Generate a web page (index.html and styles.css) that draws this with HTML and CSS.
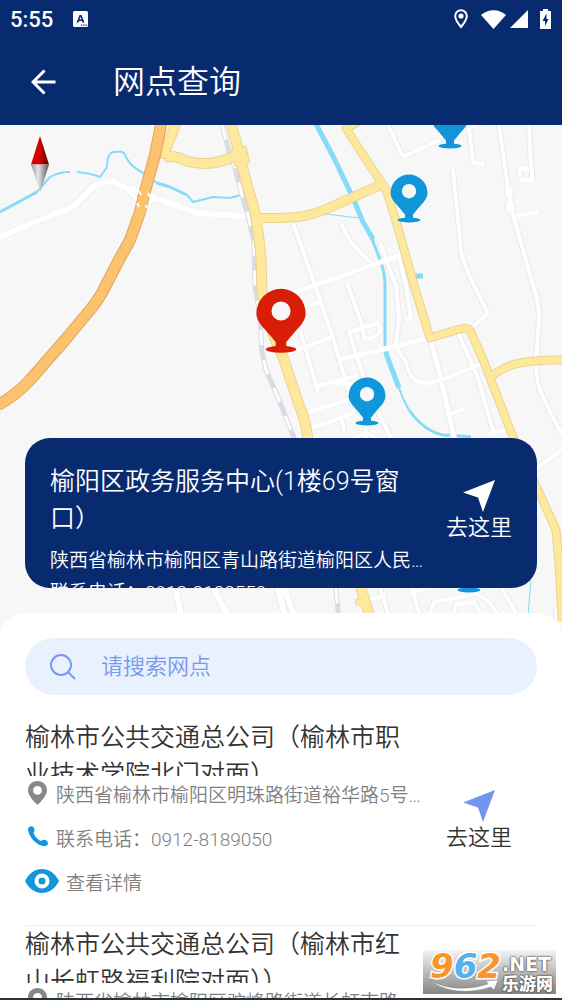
FILE: index.html
```html
<!DOCTYPE html>
<html lang="zh-CN">
<head>
  <meta charset="UTF-8">
  <meta name="viewport" content="width=device-width, initial-scale=1.0">
  <title>网点查询</title>
  <link rel="stylesheet" href="styles.css">
</head>
<body>
  <header class="header">
    <div class="status-bar">
      <span class="clock">5:55</span>
      <svg class="input-icon" width="15" height="16" viewBox="0 0 15 16">
        <rect width="15" height="16" rx="1.5" fill="#fff"/>
        <path d="M3.6 11.5 6.5 4h2l2.9 7.5H9.5L9 10H6l-.5 1.500zM6.500 8.500h2l-1-2.700z" fill="#082b6f"/>
        <path d="M8 13.500h1.300v1.300H8zm2.200 0h1.300v1.300h-1.300zm2.200 0h1.300v1.300h-1.300z" fill="#082b6f"/>
      </svg>
      <div class="status-icons">
        <svg width="14" height="20" viewBox="0 0 14 20">
          <path d="M7 1.200a5.800 5.800 0 0 0-5.800 5.900C1.200 11.300 7 18 7 18s5.800-6.700 5.800-10.900A5.800 5.800 0 0 0 7 1.200z" fill="none" stroke="#fff" stroke-width="2"/>
          <circle cx="7" cy="7" r="2.600" fill="#fff"/>
        </svg>
        <svg class="wifi" width="25" height="19" viewBox="0 0 25 19">
          <path d="M0 5C3.500 1.800 8 .2 12.500.2S21.500 1.800 25 5L12.500 19z" fill="#fff"/>
        </svg>
        <svg width="18" height="18" viewBox="0 0 18 18"><path d="M18 0v18H0z" fill="#fff"/></svg>
        <svg class="battery" width="11" height="20" viewBox="0 0 11 20">
          <path d="M3 0h5v2h3v18H0V2h3z" fill="#fff"/>
          <path d="M6.500 4.500 2.500 12h2.500v5l3.500-7H6.500z" fill="#082b6f"/>
        </svg>
      </div>
    </div>
    <div class="app-bar">
      <button class="back" type="button" aria-label="返回">
        <svg width="25" height="26" viewBox="0 0 25 26">
          <path d="M24.500 13H2.500M13.500 1.500 2 13l11.500 11.500" fill="none" stroke="#fff" stroke-width="3"/>
        </svg>
      </button>
      <h1>网点查询</h1>
    </div>
  </header>

  <main>
    <section class="map-area" aria-label="地图">
      <svg class="map" viewBox="0 125 562 515" preserveAspectRatio="xMidYMin slice">
        <defs>
          <linearGradient id="needle-red"><stop offset="0" stop-color="#e00000"/><stop offset=".45" stop-color="#d40000"/><stop offset="1" stop-color="#5c0000"/></linearGradient>
          <linearGradient id="needle-grey"><stop offset="0" stop-color="#999"/><stop offset=".4" stop-color="#e6e6e6"/><stop offset="1" stop-color="#555"/></linearGradient>
          <g id="pin">
            <path fill-rule="evenodd" d="M0 2C-2-3-7-8-12-14-16-18-18.500-22-18.500-26a18.500 18.500 0 0 1 37 0C18.500-22 16-18 12-14 7-8 2-3 0 2zM0-35a7.200 7.200 0 1 0 0 14.400A7.200 7.200 0 0 0 0-35z"/>
            <path d="M-4-4h8v4h-8z"/>
            <ellipse cy="1" rx="11.500" ry="2.600"/>
          </g>
          <g id="white-roads">
            <path d="M0 237 30 224 70 208Q78 203 85 195T97 185Q104 181 113 182L125 187 143 193 163 201 197 213 227 215 252 217" stroke-width="6"/>
            <path d="M126 188 138 201M149 203 156 196M165 204h12"/>
            <path d="M388 125 403 157 439 140M478 125 469 128 473 163 483 164"/>
            <path d="M453 171 458 218 461 252Q464 265 474 285L488 313 473 327"/>
            <path d="M499 125 509 195 514 218 533 285Q539 302 539 318L536 362Q536 378 540 390L548 408 562 435"/>
            <path d="M509 190v4M510 205v4" stroke-width="8"/>
            <path d="M529 125 531 168M519 169h13v11h-11zM516 216 538 212"/>
            <path d="M293 223 314 282 333 338 346 382 352 404"/>
            <path d="M288 294 330 280 401 255" stroke-width="5"/>
            <path d="M342 225Q348 240 356 248L371 263"/>
            <path d="M381 245 389 268 396 285 399 318 396 345Q399 353 406 362 408 374 415 380T441 380L479 365"/>
            <path d="M399 258 406 285 411 319 407 320"/>
            <path d="M348 285 361 322 364 338Q371 340 377 335T378 323L349 332 359 363 368 390 381 418 391 438"/>
            <path d="M342 359 430 338" stroke-width="5"/>
            <path d="M288 353 333 337M301 333 318 392M318 386 356 376M294 310 318 303M336 384h16"/>
            <path d="M308 412 348 400M311 428 354 413M341 418 344 430"/>
            <path d="M431 340 444 392 454 438" stroke-width="5"/>
            <path d="M459 335 478 378 494 434M453 413 463 409M490 433 506 430"/>
            <path d="M344 442 366 433 385 442M366 430v12M538 467 562 450"/>
            <path d="M174 580 182 620M209 580 230 620M276 580 286 620M284 588 296 620" stroke-width="6"/>
            <path d="M362 602 384 595M379 584 390 620M410 580 421 620M412 592 445 584M428 620 434 602 476 594Q492 600 500 620M499 584 520 620M452 618 456 605 474 602 483 618"/>
            <path d="M557 608v10" stroke-width="5"/>
          </g>
          <g id="yellow-roads">
            <path d="M177 120Q172 135 168 143 165 150 165 158M165 157Q175 155 186 161 207 167 228 159L242 152"/>
            <path d="M230 120 237 145 241 162 248 188 255 212Q259 235 261 258L262 290Q265 320 283 357L299 405Q306 420 308 440L361 588 371 620" stroke-width="9"/>
            <path d="M238 148 242 164" stroke-width="15"/>
            <path d="M257 218H281Q305 218 324 210L358 195 383 184" stroke-width="8"/>
            <path d="M358 122 346 128 361 152 381 182Q386 188 388 195L398 228 414 285 430 338 456 330Q466 327 470 330L484 362 511 432 538 490 556 530 559 563 562 620" stroke-width="7"/>
            <path d="M491 377Q500 369 515 364 530 360 562 360" stroke-width="7"/>
            <path d="M356 602h9" stroke-width="5"/>
          </g>
        </defs>
        <rect y="125" width="562" height="515" fill="#f7f7f7"/>

        <g class="water">
          <path d="M0 212 37 192" stroke-width="3"/>
          <path d="M37 192 50 177Q58 172 70 172M77 172Q90 173 100 177L107 167Q107 150 117 152 124 150 126 157 130 166 143 173L157 183 170 187"/>
          <path d="M157 183 170 187 187 195" stroke-width="3"/>
          <path d="M187 195 193 202 213 197 230 198 245 194"/>
          <path d="M315 122 334 158 353 198 363 222 373 239" stroke-width="5"/>
          <path d="M370 234 381 262Q385 275 385 285V348" stroke-width="3"/>
          <path d="M385 348 387 356 399 388" stroke-width="5"/>
          <path d="M399 388Q403 400 409 410"/>
          <path d="M409 410Q419 424 430 430T448 435L471 437" stroke-width="3"/>
          <path d="M326 214 359 218M531 580 528 615" stroke-width="1"/>
          <path d="M415 276h8" stroke-width="5"/>
        </g>

        <use href="#white-roads" class="white-roads"/>
        <path class="rail" d="M222 125 230 155 235 168 242 195 248 215 254 242 255 285 260 318 262 352 266 370 277 395 294 438 336 590 339 620"/>
        <path class="rail-dash" d="M222 125 230 155 235 168 242 195 248 215 254 242 255 285 260 318 262 352 266 370 277 395 294 438 336 590 339 620"/>
        <g class="yellow-casing"><use href="#yellow-roads" x="-1"/><use href="#yellow-roads" x="1"/><use href="#yellow-roads" y="1"/><use href="#yellow-roads" y="-1"/></g>
        <use href="#yellow-roads" class="yellow-fill"/>
        <path class="highway-casing" d="M162 120 155 155 144 195 140 212 130 240 120 258 106 285Q100 298 90 310L65 340 30 380Q15 396-2 405"/>
        <path class="highway" d="M162 120 155 155 144 195 140 212 130 240 120 258 106 285Q100 298 90 310L65 340 30 380Q15 396-2 405"/>
        <path d="M139 191l2 4M148 193l2 4M137 203l2 4M146 205l1 3" stroke="#fff" stroke-width="2"/>

        <use href="#pin" class="pin" transform="translate(450 145)"/>
        <use href="#pin" class="pin" transform="translate(409 219)"/>
        <use href="#pin" class="pin" transform="translate(367 422)"/>
        <use href="#pin" class="pin" transform="translate(469 589)"/>
        <use href="#pin" class="pin-active" transform="translate(281 348) scale(1.330)"/>

        <path d="M40 136 49 164.500H31z" fill="url(#needle-red)"/>
        <path d="M31 164.500h18L40.500 192z" fill="url(#needle-grey)"/>
      </svg>

      <article class="current">
        <div class="info">
          <h2>榆阳区政务服务中心(1楼69号窗口）</h2>
          <p>陕西省榆林市榆阳区青山路街道榆阳区人民…</p>
          <p>联系电话：0912-8188559</p>
        </div>
        <button class="go" type="button">
          <svg width="32" height="32" viewBox="0 0 32 32"><path d="M32 0 20 32 15 17.500 0 12.500z" fill="#fff"/></svg>
          <span>去这里</span>
        </button>
      </article>
    </section>

    <section class="sheet">
      <label class="search">
        <svg width="26" height="26" viewBox="0 0 26 26" fill="none" stroke="#7699ee" stroke-width="2">
          <circle cx="11" cy="11" r="10"/><path d="m18 18 7 7"/>
        </svg>
        <input type="search" placeholder="请搜索网点" aria-label="请搜索网点">
      </label>

      <ul class="list">
        <li>
          <div class="info">
            <h2>榆林市公共交通总公司（榆林市职业技术学院北门对面）</h2>
            <p>
              <svg width="24" height="24" viewBox="0 0 24 24"><path fill-rule="evenodd" d="M12.500 0C7 0 3 4 3 9.300 3 15.500 12.500 24 12.500 24S22 15.500 22 9.300C22 4 18 0 12.500 0zm0 5a4.400 4.400 0 1 1 0 8.800 4.400 4.400 0 0 1 0-8.800z" fill="#888"/></svg>
              陕西省榆林市榆阳区明珠路街道裕华路5号…
            </p>
            <p>
              <svg width="24" height="24" viewBox="0 0 24 24"><path d="M3 4.500Q3 2 6 1.300 8.500 1 9.300 3.500 10.200 6 8.500 7.500 9 10.500 11.500 13 14 15.500 16 16 18 14.200 20.500 15 23.200 16 23 18.500 22.500 21 20 21.300 14 21 8.500 15.500 3.500 10 3 4.500z" fill="#1296db"/></svg>
              联系电话：0912-8189050
            </p>
            <a href="#detail">
              <svg width="34" height="26" viewBox="0 0 34 26"><path d="M0 13C4 5 10 1 17 1s13 4 17 12c-4 8-10 12-17 12S4 21 0 13z" fill="#1296db"/><circle cx="17" cy="13" r="5.500" fill="none" stroke="#fff" stroke-width="4"/></svg>
              查看详情
            </a>
          </div>
          <button class="go" type="button">
            <svg width="32" height="32" viewBox="0 0 32 32"><path d="M32 0 20 32 15 17.500 0 12.500z" fill="#7196f2"/></svg>
            <span>去这里</span>
          </button>
        </li>
        <li>
          <div class="info">
            <h2>榆林市公共交通总公司（榆林市红山长虹路福利院对面））</h2>
            <p>
              <svg width="24" height="24" viewBox="0 0 24 24"><path fill-rule="evenodd" d="M12.500 0C7 0 3 4 3 9.300 3 15.500 12.500 24 12.500 24S22 15.500 22 9.300C22 4 18 0 12.500 0zm0 5a4.400 4.400 0 1 1 0 8.800 4.400 4.400 0 0 1 0-8.800z" fill="#888"/></svg>
              陕西省榆林市榆阳区驼峰路街道长虹南路
            </p>
          </div>
        </li>
      </ul>
    </section>
  </main>

  <div class="watermark">
    <span class="digits"><i>9</i><i class="blue">6</i><i>2</i></span>
    <span class="site"><b class="net">.NET</b><b>乐游网</b></span>
    <svg class="swoosh" width="68" height="12" viewBox="0 0 68 12"><path d="M0 1Q28 14 58 4L56 1 68 0 64 10 61 7Q26 18 0 1z" fill="#fff" stroke="#888" stroke-width=".5"/></svg>
  </div>
</body>
</html>
```

FILE: styles.css
```css
:root {
  --navy: #082b6f;
  --blue: #1296db;
  --text: #333;
  --muted: #808080;
}

* {
  box-sizing: border-box;
}

body {
  margin: 0;
  height: 100vh;
  display: flex;
  flex-direction: column;
  overflow: hidden;
  background: #fff;
  border-bottom: 2px solid #26343c;
  font-family: Roboto, "Noto Sans CJK SC", sans-serif;
  font-weight: 350;
  color: var(--text);
}

h1, h2, p, ul {
  margin: 0;
  padding: 0;
  font-weight: inherit;
}

button {
  padding: 0;
  border: 0;
  background: none;
  color: inherit;
  font: inherit;
}

svg {
  display: block;
  flex: none;
}

main {
  flex: 1;
  min-height: 0;
}

/* header */
.header {
  flex: none;
  background: var(--navy);
  color: #fff;
}

.status-bar {
  display: flex;
  align-items: center;
  height: 38px;
  padding: 0 11px 0 10px;
}

.clock {
  font-size: 22px;
  font-weight: 500;
}

.input-icon {
  margin-left: 20px;
}

.status-icons {
  display: flex;
  align-items: center;
  margin-left: auto;
}

.wifi {
  margin: 0 4px 0 13px;
}

.battery {
  margin-left: 12px;
}

.app-bar {
  display: flex;
  align-items: center;
  gap: 57px;
  height: 87px;
  padding-left: 31px;
}

h1 {
  font-size: 32px;
  line-height: 40px;
}

/* map */
.map-area {
  display: grid;
}

.map-area > * {
  grid-area: 1 / 1;
}

.map {
  width: 100%;
  height: 515px;
}

.map path {
  stroke-linejoin: round;
}

.water {
  fill: none;
  stroke: #85dcf8;
  stroke-width: 2;
}

.white-roads {
  fill: none;
  stroke: #fff;
  stroke-width: 4;
  stroke-linecap: round;
  filter: drop-shadow(1px 0 0 #e9e9ee) drop-shadow(-1px 0 0 #e9e9ee);
}

.rail {
  fill: none;
  stroke: #d9dbe5;
  stroke-width: 5;
}

.rail-dash {
  fill: none;
  stroke: #fff;
  stroke-width: 3;
  stroke-dasharray: 15;
}

.yellow-casing,
.yellow-fill {
  fill: none;
  stroke: #e8d391;
  stroke-width: 9;
}

.yellow-fill {
  stroke: #fde89b;
}

.highway,
.highway-casing {
  fill: none;
  stroke: #dda65c;
  stroke-width: 12;
}

.highway {
  stroke: #fdc26d;
  stroke-width: 10;
}

.pin {
  fill: var(--blue);
}

.pin-active {
  fill: #d81e06;
}

.current {
  align-self: end;
  display: flex;
  height: 150px;
  margin: 0 25px 52px;
  padding: 25px 25px 0;
  overflow: hidden;
  border-radius: 25px;
  background: var(--navy);
  color: #fff;
}

.info {
  flex: 1;
  min-width: 0;
}

h2 {
  padding-right: 24px;
  font-size: 25px;
  line-height: 37px;
}

.current h2 {
  margin-bottom: 8px;
}

.current p {
  font-size: 19px;
  line-height: 32px;
  white-space: nowrap;
}

.go {
  flex: none;
  display: flex;
  flex-direction: column;
  align-items: center;
  justify-content: center;
  font-size: 22px;
  line-height: 32px;
}

.current .go {
  padding-bottom: 27px;
}

/* list */
.sheet {
  position: relative;
  margin-top: -27px;
  padding: 25px 25px 0;
  border-radius: 25px 25px 0 0;
  background: #fff;
}

.search {
  display: flex;
  align-items: center;
  gap: 25px;
  height: 57px;
  padding: 0 25px;
  border-radius: 29px;
  background: #eaf1fe;
}

.search input {
  flex: 1;
  min-width: 0;
  padding: 0;
  border: 0;
  outline: 0;
  background: none;
  color: #7699ee;
  font: inherit;
  font-size: 22px;
}

.search input::placeholder {
  color: #7699ee;
}

.list {
  margin-top: 24px;
  list-style: none;
}

.list li {
  display: grid;
  grid-template-columns: 1fr 66px;
  padding-right: 25px;
  border-bottom: 1px solid #eee;
}

.list .info {
  display: flex;
  flex-direction: column;
  gap: 20px;
  padding-bottom: 32px;
}

.list h2 {
  height: 57px;
  margin-bottom: -15px;
  overflow: hidden;
}

.list p,
.list a {
  display: flex;
  align-items: center;
  gap: 7px;
  height: 24px;
  color: var(--muted);
  font-size: 19px;
  text-decoration: none;
  white-space: nowrap;
}

/* watermark */
.watermark {
  position: absolute;
  right: 6px;
  bottom: 6px;
  display: flex;
  align-items: flex-start;
  gap: 1px;
  width: 133px;
  height: 44px;
  padding-left: 7px;
  background: linear-gradient(#f4f4f4, #858585);
  font-weight: 700;
}

.digits {
  display: flex;
  font-size: 34px;
  line-height: 32px;
  color: #f9952b;
  -webkit-text-stroke: 3px #fff;
  paint-order: stroke fill;
  font-family: "DejaVu Sans", sans-serif;
}

.digits .blue {
  color: #55b1ea;
}

.site {
  display: flex;
  flex-direction: column;
  padding-top: 4px;
  color: #fff;
  font-size: 17px;
  line-height: 20px;
  text-shadow: 0 0 2px #444, 0 0 2px #444;
}

.net {
  font-family: "DejaVu Sans", sans-serif;
  font-size: 19px;
}

.swoosh {
  position: absolute;
  left: 7px;
  bottom: 2px;
}
```
